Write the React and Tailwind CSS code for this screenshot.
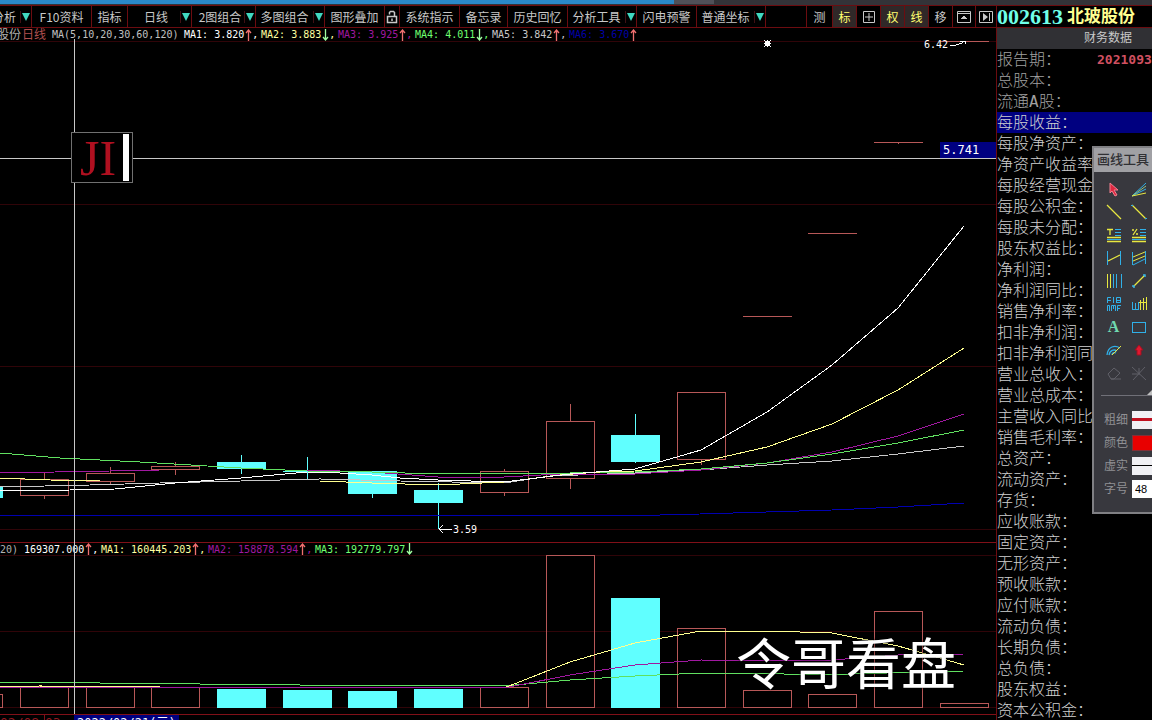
import { useState } from "react";

const TOOLS = [
  { label: "分析", box: "w-8", menu: true, pad: "-ml-3" },
  { label: "F10资料", box: "w-[60px]" },
  { label: "指标", box: "w-9" },
  { label: "日线", box: "w-16", menu: true, pad: "pl-1" },
  { label: "2图组合", box: "w-16", menu: true, pad: "pl-1" },
  { label: "多图组合", box: "w-[69px]", menu: true },
  { label: "图形叠加", box: "w-[60px]" },
  { label: "锁定", box: "w-[15px]", icon: "lock" },
  { label: "系统指示", box: "w-[60px]" },
  { label: "备忘录", box: "w-12" },
  { label: "历史回忆", box: "w-[60px]" },
  { label: "分析工具", box: "w-[69px]", menu: true },
  { label: "闪电预警", box: "w-[60px]" },
  { label: "普通坐标", box: "w-[69px]", menu: true },
];

const TOGGLES = [
  { label: "测", box: "w-[26px]" },
  { label: "标", on: true, box: "w-6" },
  { label: "十字", icon: "cross", box: "w-6" },
  { label: "权", on: true, box: "w-6" },
  { label: "线", on: true, box: "w-6" },
  { label: "移", box: "w-6" },
  { label: "上移", icon: "up", box: "w-[23px]" },
  { label: "下一个", icon: "next", box: "w-5" },
];

const PRICE_MA = [
  { text: "MA1: 3.820", up: true, color: "text-white" },
  { text: "MA2: 3.883", up: false, color: "text-[#ffffa0]" },
  { text: "MA3: 3.925", up: true, color: "text-[#a018a0]" },
  { text: "MA4: 4.011", up: false, color: "text-[#70ff70]" },
  { text: "MA5: 3.842", up: true, color: "text-[#c8c8c8]" },
  { text: "MA6: 3.670", up: true, color: "text-[#0000a8]" },
];

const VOLUME_MA = [
  { text: "MA1: 160445.203", up: true, color: "text-[#ffffa0]" },
  { text: "MA2: 158878.594", up: true, color: "text-[#a018a0]" },
  { text: "MA3: 192779.797", up: false, color: "text-[#70ff70]" },
];

// x = centre, o/c = body top and bottom, h/l = wick ends
const CANDLES = [
  { x: -22, h: 487, o: 487, c: 498, l: 498, down: true },
  { x: 44, h: 473, o: 479, c: 496, l: 499 },
  { x: 110, h: 467, o: 473, c: 482, l: 484 },
  { x: 175, h: 462, o: 466, c: 470, l: 475 },
  { x: 241, h: 455, o: 462, c: 469, l: 474, down: true },
  { x: 307, h: 457, o: 471, c: 472, l: 479, down: true },
  { x: 372, h: 471, o: 471, c: 494, l: 498, down: true },
  { x: 438, h: 483, o: 490, c: 503, l: 529, down: true },
  { x: 504, h: 469, o: 471, c: 493, l: 496 },
  { x: 570, h: 404, o: 421, c: 479, l: 489 },
  { x: 635, h: 414, o: 435, c: 462, l: 463, down: true },
  { x: 701, h: 392, o: 392, c: 460, l: 465 },
  { x: 767, h: 316, o: 316, c: 316, l: 316 },
  { x: 832, h: 233, o: 233, c: 233, l: 233 },
  { x: 898, h: 142, o: 142, c: 142, l: 144 },
  { x: 964, h: 41, o: 41, c: 41, l: 41 },
];

const VOLUMES = [
  { x: -22, y: 694 },
  { x: 44, y: 686 },
  { x: 110, y: 687 },
  { x: 175, y: 687 },
  { x: 241, y: 689, down: true },
  { x: 307, y: 690, down: true },
  { x: 372, y: 691, down: true },
  { x: 438, y: 689, down: true },
  { x: 504, y: 687 },
  { x: 570, y: 555 },
  { x: 635, y: 598, down: true },
  { x: 701, y: 628 },
  { x: 767, y: 690 },
  { x: 832, y: 694 },
  { x: 898, y: 611 },
  { x: 964, y: 703 },
];

const PRICE_LINES = [
  { color: "#0000b0", points: "0,515.5 640,515.5 700,514 832,510 898,507 964,503" },
  { color: "#c8c8c8", points: "0,487 90,485 160,483 241,481 320,479 400,481 504,483 550,476 635,473 701,470 767,465 832,461 898,454 964,446" },
  { color: "#a018a0", points: "0,473 110,471 160,470 307,470 372,472 438,477 504,477 560,474 635,474 701,470 767,463 832,452 898,436 964,414" },
  { color: "#60e060", points: "0,453 60,458 140,462 241,468 307,471 372,472 438,474 570,473 635,472 701,469 767,463 832,454 898,443 964,430" },
  { color: "#ffff90", points: "0,478 50,480 100,481 320,481 372,483 438,485 504,482 560,475 600,472 635,471 701,462 767,447 832,424 898,390 964,348" },
  { color: "#ffffff", points: "0,491 70,490 115,489 175,483 241,478 307,472 340,473 372,475 400,478 438,480 504,482 570,474 635,469 701,450 767,412 832,365 898,308 964,226" },
];

const VOLUME_LINES = [
  { color: "#60e060", points: "0,682 200,684 300,685 504,686 570,680 635,676 701,673 767,673 800,675 850,674 964,671" },
  { color: "#ffff90", points: "0,687 40,686 160,687 241,688 504,688 570,662 635,643 701,631 767,631 832,633 898,646 964,665" },
  { color: "#a018a0", points: "0,687 504,688 570,675 635,665 701,660 767,661 832,660 898,655 964,654" },
];

const FINANCE = [
  "报告期", "总股本", "流通A股", "每股收益", "每股净资产", "净资产收益率", "每股经营现金", "每股公积金",
  "每股未分配", "股东权益比", "净利润", "净利润同比", "销售净利率", "扣非净利润", "扣非净利润同", "营业总收入",
  "营业总成本", "主营收入同比", "销售毛利率", "总资产", "流动资产", "存货", "应收账款", "固定资产",
  "无形资产", "预收账款", "应付账款", "流动负债", "长期负债", "总负债", "股东权益", "资本公积金",
];

const Y = "#e8e840";
const B = "#30b0e8";

const DRAW_TOOLS = [
  { label: "选择", art: <path d="M4 2v10l2-2 3 5 2-1-3-5h4z" fill="#e02840" stroke="#f08090" /> },
  { label: "扇形线", art: <><path d="M1 15L15 2M1 15L15 8" stroke={B} /><path d="M1 15L15 5" stroke="#90c080" /><path d="M1 15L15 12" stroke={Y} /></> },
  { label: "直线", art: <path d="M1 1L15 15" stroke={Y} strokeWidth="1.3" /> },
  { label: "线段", art: <><path d="M1 1L15 15" stroke={Y} strokeWidth="1.3" /><path d="M0 1.5h2M14 14.5h2" stroke={B} /></> },
  { label: "黄金分割", art: <><path d="M1 2.5h6M4 2v6M1 10.5h14M1 14.5h14" stroke={Y} strokeWidth="1.3" /><path d="M9 2.5h6M9 5.5h6M9 8.5h6M1 12.5h14" stroke={B} /></> },
  { label: "百分比", art: <><path d="M1 3h2M6 2L2 8M5 7h2M1 10.5h14M1 14.5h14" stroke={Y} strokeWidth="1.3" /><path d="M9 2.5h6M9 5.5h6M9 8.5h6M1 12.5h14" stroke={B} /></> },
  { label: "波段线", art: <><path d="M1.5 1v14M14.5 1v14" stroke={B} /><path d="M2 11L14 5" stroke={Y} strokeWidth="1.3" /></> },
  { label: "平行通道", art: <><path d="M1.5 2v13M14.5 1v13M2 15L14 9" stroke={B} /><path d="M2 7L14 2M2 11L14 6" stroke={Y} /></> },
  { label: "周期线", art: <><path d="M1.5 1v14M4.5 1v14" stroke={Y} /><path d="M7.5 1v14M10.5 1v14M15.5 1v14" stroke={B} /></> },
  { label: "箭头线", art: <><path d="M2 14L14 2" stroke={Y} strokeWidth="1.3" /><path d="M12 2h2v2M1 13h2v2" stroke={B} strokeWidth="1.5" /></> },
  { label: "斐波那契", art: <path d="M1.5 7V1.5H5M2 4.5h3M7.5 1v6M10.5 7V1.5h4v5h-4M11 4.5h3M1.5 15V9.5h2V15M5.5 15V9.5h4V15M7.5 10v3M11.5 15V9.5H15M12 12.5h2" stroke={B} /> },
  { label: "时间周期", art: <><path d="M1.5 6v7M4.5 7v6M7.5 6v7M1 13.5h7" stroke={B} /><path d="M9.5 4v10M12.5 2v12M15.5 1v13M8 6.5h8" stroke={Y} /></> },
  { label: "文字", text: "A" },
  { label: "矩形", art: <rect x="1.5" y="3.5" width="13" height="10" stroke={B} /> },
  { label: "弧线", art: <><path d="M1 13C2 4 9 3 14 6M3 13C4 8 8 7 11 9M6 13c0-2 2-3 4-2" stroke={B} strokeWidth="1.3" /><path d="M6 13L15 4" stroke={Y} /></> },
  { label: "上箭头", art: <path d="M8 3l4 5h-2v5H6V8H4z" fill="#e01830" stroke="#a01020" /> },
  { label: "擦除", art: <path d="M2 9l6-6 6 5-6 6H5zM5 14h10" stroke="#606068" /> },
  { label: "全部删除", art: <path d="M1 2l14 13M14 2L2 15M1 9h8M8 3v6" stroke="#606068" /> },
];

function ToolIcon({ name }) {
  return (
    <svg className="shrink-0" width="14" height="14" viewBox="0 0 14 14" fill="none" stroke="#c8c8c8" aria-hidden="true">
      {name === "lock" && <path d="M2.5 6.5h9v6h-9zM4.5 4.5v-2l1-1h3l1 1v4M7 8.5v2.5" strokeWidth="1.5" />}
      {name === "cross" && <path d="M1.5 1.5h11v11h-11zM3 7h8M7 3v8" />}
      {name === "up" && <path d="M.5 1.5h13v11H.5zM.5 3.5h13M4 8.5h6M5 7.5h4M6 6.5h2" />}
      {name === "next" && <><path d="M.5 1.5h13v11H.5zM10.5 3v8" /><path d="M4 3v8l5-4z" fill="#c8c8c8" stroke="none" /></>}
    </svg>
  );
}

function Toolbar() {
  return (
    <nav className="flex h-[23px] shrink-0 border-y border-[#6c0c10] font-['Noto_Sans_CJK_SC',sans-serif] text-xs leading-none text-[#c8c8c8]">
      {TOOLS.map((t) => (
        <button key={t.label} aria-label={t.label} className={`flex shrink-0 items-center overflow-hidden border-r border-[#6c0c10] whitespace-nowrap ${t.box}`}>
          <span className={`flex flex-1 justify-center ${t.pad || ""}`}>{t.icon ? <ToolIcon name={t.icon} /> : t.label}</span>
          {t.menu && (
            <span className="flex h-3 w-[11px] shrink-0 items-center justify-center border-l border-[#401014]">
              <svg width="8" height="8" viewBox="0 0 8 8" aria-hidden="true"><path d="M0 0h8L4 8z" fill="#40d8c0" /></svg>
            </span>
          )}
        </button>
      ))}
      <div className="flex-1 border-r border-[#6c0c10]" />
      {TOGGLES.map((t) => (
        <button key={t.label} aria-label={t.label} className={`flex shrink-0 items-center justify-center border-r border-[#6c0c10] last:border-r-0 ${t.box} ${t.on ? "bg-[#302828] text-[#ffff70]" : ""}`}>
          {t.icon ? <ToolIcon name={t.icon} /> : t.label}
        </button>
      ))}
    </nav>
  );
}

function Trend({ up }) {
  return (
    <svg className="shrink-0" width="7" height="12" viewBox="0 0 7 12" fill="none" stroke={up ? "#f07070" : "#a0ffa0"} aria-hidden="true">
      <path d={up ? "M3.5 12V1M1 4l2.5-3L6 4" : "M3.5 0v11M1 8l2.5 3L6 8"} strokeWidth="1.3" />
    </svg>
  );
}

function MaItem({ text, up, color, width, last }) {
  return (
    <span className={`flex shrink-0 items-center ${width} ${color}`}>
      <span className="mr-px">{text}</span>
      <Trend up={up} />
      {!last && ","}
    </span>
  );
}

function Plot({ viewBox, grid, children, lines }) {
  return (
    <svg className="absolute inset-0 h-full w-full overflow-visible" viewBox={viewBox} preserveAspectRatio="none" fill="none" shapeRendering="crispEdges">
      {grid.map((y) => <path key={y} d={`M0 ${y + 0.5}H996`} stroke="#300408" />)}
      {children}
      {lines.map((l, i) => <polyline key={i} points={l.points} stroke={l.color} vectorEffect="non-scaling-stroke" />)}
    </svg>
  );
}

function PriceChart() {
  return (
    <div className="relative min-h-0 flex-[500]">
      <Plot viewBox="0 42 996 500" grid={[204, 366, 529]} lines={PRICE_LINES}>
        {CANDLES.map((k) => {
          const stroke = k.down ? "#60ffff" : "#b85858";
          return (
            <g key={k.x} stroke={stroke}>
              <path d={`M${k.x + 0.5} ${k.h}V${k.o}M${k.x + 0.5} ${k.c}V${k.l}`} />
              {k.c - k.o < 2
                ? <path d={`M${k.x - 24} ${k.o + 0.5}h49`} />
                : <rect x={k.x - 23.5} y={k.o + 0.5} width="48" height={k.c - k.o - 1} fill={k.down ? stroke : "none"} />}
            </g>
          );
        })}
        <path d="M950 45.5h5l8-3M960 41.5h5v2" stroke="#fff" />
        <path d="M439 529.5h13M443 525l-4 4 4 4" stroke="#fff" />
        <path d="M765.5 41.5h4v4h-4z" fill="#fff" stroke="#fff" />
        <path d="M764 40.5h1M770 40.5h1M764 46.5h1M770 46.5h1M767 40.5h1M767 46.5h1M764 43.5h7" stroke="#fff" />
      </Plot>
      <span className="absolute top-[-3px] right-12 leading-3 text-white">6.42</span>
      <span className="absolute bottom-1.5 left-[453px] leading-3 text-white">3.59</span>
      <span className="absolute top-[100px] right-0 h-4 w-14 bg-[#000080] pl-[3px] text-xs leading-4 text-white">5.741</span>
    </div>
  );
}

function VolumeChart() {
  return (
    <div className="relative min-h-0 flex-[159]">
      <Plot viewBox="0 555 996 159" grid={[555, 631, 707]} lines={VOLUME_LINES}>
        {VOLUMES.map((v) => (
          <rect key={v.x} x={v.x - 23.5} y={v.y + 0.5} width="48" height={707 - v.y} stroke={v.down ? "#60ffff" : "#b85858"} fill={v.down ? "#60ffff" : "none"} />
        ))}
      </Plot>
      <div className="absolute right-10 bottom-[18px] font-['Liberation_Serif','Noto_Sans_CJK_SC',serif] text-[55px] leading-[60px] whitespace-nowrap text-white [text-shadow:0_0_3px_#000]">令哥看盘</div>
    </div>
  );
}

function ChartArea() {
  const [note, setNote] = useState("JI");
  return (
    <main className="relative flex min-w-0 flex-1 flex-col overflow-hidden border-r border-[#6c0c10]">
      <Toolbar />
      <div className="flex h-[14px] shrink-0 items-center border-b border-[#300408] whitespace-nowrap">
        <span className="-ml-[3px] text-xs leading-none text-[#b0b0b0]">股份</span>
        <span className="mr-1.5 ml-px text-xs leading-none text-[#b05050]">日线</span>
        <span className="w-[132px] text-[#c0c0c0]">MA(5,10,20,30,60,120)</span>
        {PRICE_MA.map((m, i) => <MaItem key={m.text} {...m} width="w-[77px]" last={i === PRICE_MA.length - 1} />)}
      </div>
      <PriceChart />
      <div className="flex h-[13px] shrink-0 items-center border-t border-[#801018] whitespace-nowrap">
        <span className="w-6 text-[#b0b0b0]">20)</span>
        <MaItem text="169307.000" up color="text-white" width="w-[77px]" />
        {VOLUME_MA.map((m, i) => <MaItem key={m.text} {...m} width="w-[107px]" last={i === VOLUME_MA.length - 1} />)}
      </div>
      <VolumeChart />
      <div className="flex h-1.5 shrink-0 overflow-hidden border-t border-[#801018] text-[13px] leading-4 whitespace-nowrap text-[#901820]">
        <span className="w-11">02/08</span>
        <span className="w-[30px] border-l border-[#801018]">03</span>
        <span className="bg-[#000080] px-[3px] text-xs leading-4 text-white">2022/02/21(三)</span>
      </div>

      <div className="absolute top-[34px] bottom-1.5 left-[74px] w-px bg-[#c8c8c8]" />
      <div className="absolute top-[153px] right-0 left-0 h-px bg-[#c8c8c8]" />
      <div className="absolute top-[127px] left-[71px] flex h-[51px] w-[62px] items-center border border-[#707070] bg-black">
        <input
          aria-label="标注文字"
          value={note}
          onChange={(e) => setNote(e.target.value)}
          className="h-full w-[51px] bg-transparent pl-2 font-['Liberation_Serif',serif] text-[50px] leading-none text-[#b01020] outline-none"
        />
        <span className="h-[47px] w-1.5 bg-white" />
      </div>
    </main>
  );
}

function Sidebar() {
  return (
    <aside className="w-[155px] shrink-0 overflow-hidden">
      <div className="w-[222px]">
        <h1 className="flex h-[23px] items-center gap-1 border-y border-[#6c0c10] font-['Liberation_Serif','Noto_Sans_CJK_SC',serif] leading-none font-bold whitespace-nowrap">
          <span className="text-[22px] text-[#70ffe8]">002613</span>
          <span className="text-[17px] text-[#ffff90]">北玻股份</span>
        </h1>
        <table className="w-full table-fixed border-collapse text-base leading-[21px] text-[#d0d0d0]">
          <caption className="h-[21px] bg-[#303034] text-xs leading-[21px] text-[#c8c8c8]">财务数据</caption>
          <tbody>
            {FINANCE.map((name, i) => (
              <tr key={name} className={`h-[21px] ${i === 3 ? "bg-[#000080]" : ""} ${i < 3 ? "text-[#a0a0a0]" : ""}`}>
                <th scope="row" className="w-[100px] p-0 text-left font-light whitespace-nowrap">{name}：</th>
                <td className="p-0 text-[13px] font-bold text-[#d05060]">{i === 0 && "2021093"}</td>
              </tr>
            ))}
          </tbody>
        </table>
      </div>
    </aside>
  );
}

function DrawPalette() {
  const [size, setSize] = useState("48");
  return (
    <section className="absolute top-[146px] right-0 w-[60px] overflow-hidden border-y-2 border-l-2 border-[#808084] bg-[#38383e]">
      <h2 className="h-6 bg-[#a0a0a4] pl-[3px] text-[13px] leading-6 font-medium whitespace-nowrap text-[#303034]">画线工具</h2>
      <div className="mt-[5px] ml-[7px] grid w-[50px] grid-cols-2">
        {DRAW_TOOLS.map((t) => (
          <button key={t.label} aria-label={t.label} className="flex h-[23px] items-center justify-center">
            {t.text
              ? <span className="font-['Liberation_Serif',serif] text-base leading-none font-bold text-[#70d8b0]">{t.text}</span>
              : <svg width="16" height="16" viewBox="0 0 16 16" fill="none" aria-hidden="true">{t.art}</svg>}
          </button>
        ))}
      </div>
      <div className="ml-[7px] flex h-3 justify-end border-b border-[#707078]">
        <svg className="mt-1.5" width="5" height="5" viewBox="0 0 5 5" aria-hidden="true"><path d="M0 5L5 0v5z" fill="#c0c0c0" /></svg>
      </div>
      <div className="mt-3 mb-3 ml-2.5 text-xs text-[#909094]">
        <div className="flex h-[23px] items-center justify-between">
          <span>粗细</span>
          <button aria-label="粗细" className="flex h-[18px] w-5 items-center bg-[#f0f0f4]"><span className="h-[3px] w-full bg-[#c01020]" /></button>
        </div>
        <div className="flex h-[23px] items-center justify-between">
          <span>颜色</span>
          <button aria-label="颜色" className="h-4 w-5 border border-r-0 border-[#803038] bg-[#e80000]" />
        </div>
        <div className="flex h-[23px] items-center justify-between">
          <span>虚实</span>
          <button aria-label="虚实" className="flex h-[18px] w-5 items-center bg-[#f0f0f4]"><span className="h-px w-full bg-black" /></button>
        </div>
        <div className="flex h-[23px] items-center justify-between">
          <label htmlFor="font-size">字号</label>
          <input id="font-size" value={size} onChange={(e) => setSize(e.target.value)} className="h-[18px] w-5 bg-white pl-[3px] font-['Liberation_Sans',sans-serif] text-[11px] text-black outline-none" />
        </div>
      </div>
    </section>
  );
}

export default function App() {
  return (
    <div className="relative flex h-screen flex-col overflow-hidden bg-black font-['DejaVu_Sans_Mono','Noto_Sans_CJK_SC',monospace] text-[10px]">
      <div className="flex h-[5px] shrink-0 bg-[#333338]">
        <div className="h-1 w-[58.5%] bg-[#2a88c8]" />
        <div className="h-1 w-10 bg-[#505058]" />
      </div>
      <div className="flex min-h-0 flex-1">
        <ChartArea />
        <Sidebar />
      </div>
      <DrawPalette />
    </div>
  );
}
